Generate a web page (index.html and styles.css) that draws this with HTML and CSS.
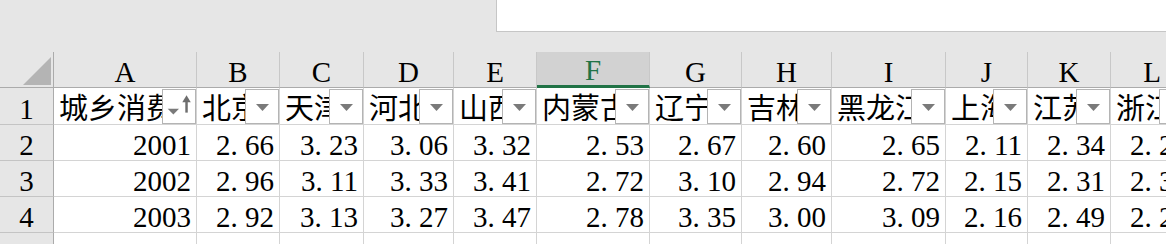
FILE: index.html
```html
<!DOCTYPE html>
<html lang="zh-CN">
<head>
<meta charset="utf-8">
<title>城乡消费</title>
<link rel="stylesheet" href="styles.css">
</head>
<body>
<div class="topbar"><div class="formula"></div></div>
<div class="sheet">
  <div class="corner"><svg width="28" height="28" viewBox="0 0 28 28"><polygon points="28,0 28,28 0,28" fill="#b4b4b4"/></svg></div>
  <div class="ch">A</div><div class="ch">B</div><div class="ch">C</div><div class="ch">D</div><div class="ch">E</div><div class="ch sel">F</div><div class="ch">G</div><div class="ch">H</div><div class="ch">I</div><div class="ch">J</div><div class="ch">K</div><div class="ch">L</div>

  <div class="rh r1">1</div>
  <div class="c">城乡消费水平<span class="fb"><svg width="34" height="35" viewBox="0 0 34 35"><polygon points="5,20 17,20 11,26" fill="#7a7a7a"/><polygon points="20.5,13 25,5.5 29.5,13" fill="#6e6e6e"/><rect x="23.7" y="12" width="2.6" height="12" fill="#6e6e6e"/></svg></span></div>
  <div class="c">北京<span class="fb"><svg class="ar" width="13" height="7" viewBox="0 0 13 7"><polygon points="0,0 13,0 6.5,7" fill="#7a7a7a"/></svg></span></div>
  <div class="c">天津<span class="fb"><svg class="ar" width="13" height="7" viewBox="0 0 13 7"><polygon points="0,0 13,0 6.5,7" fill="#7a7a7a"/></svg></span></div>
  <div class="c">河北<span class="fb"><svg class="ar" width="13" height="7" viewBox="0 0 13 7"><polygon points="0,0 13,0 6.5,7" fill="#7a7a7a"/></svg></span></div>
  <div class="c">山西<span class="fb"><svg class="ar" width="13" height="7" viewBox="0 0 13 7"><polygon points="0,0 13,0 6.5,7" fill="#7a7a7a"/></svg></span></div>
  <div class="c">内蒙古<span class="fb"><svg class="ar" width="13" height="7" viewBox="0 0 13 7"><polygon points="0,0 13,0 6.5,7" fill="#7a7a7a"/></svg></span></div>
  <div class="c">辽宁<span class="fb"><svg class="ar" width="13" height="7" viewBox="0 0 13 7"><polygon points="0,0 13,0 6.5,7" fill="#7a7a7a"/></svg></span></div>
  <div class="c">吉林<span class="fb"><svg class="ar" width="13" height="7" viewBox="0 0 13 7"><polygon points="0,0 13,0 6.5,7" fill="#7a7a7a"/></svg></span></div>
  <div class="c">黑龙江<span class="fb"><svg class="ar" width="13" height="7" viewBox="0 0 13 7"><polygon points="0,0 13,0 6.5,7" fill="#7a7a7a"/></svg></span></div>
  <div class="c">上海<span class="fb"><svg class="ar" width="13" height="7" viewBox="0 0 13 7"><polygon points="0,0 13,0 6.5,7" fill="#7a7a7a"/></svg></span></div>
  <div class="c">江苏<span class="fb"><svg class="ar" width="13" height="7" viewBox="0 0 13 7"><polygon points="0,0 13,0 6.5,7" fill="#7a7a7a"/></svg></span></div>
  <div class="c">浙江<span class="fb"><svg class="ar" width="13" height="7" viewBox="0 0 13 7"><polygon points="0,0 13,0 6.5,7" fill="#7a7a7a"/></svg></span></div>

  <div class="rh">2</div>
  <div class="c n">2001</div>
  <div class="c n">2<span class="d">.</span>66</div>
  <div class="c n">3<span class="d">.</span>23</div>
  <div class="c n">3<span class="d">.</span>06</div>
  <div class="c n">3<span class="d">.</span>32</div>
  <div class="c n">2<span class="d">.</span>53</div>
  <div class="c n">2<span class="d">.</span>67</div>
  <div class="c n">2<span class="d">.</span>60</div>
  <div class="c n">2<span class="d">.</span>65</div>
  <div class="c n">2<span class="d">.</span>11</div>
  <div class="c n">2<span class="d">.</span>34</div>
  <div class="c n">2<span class="d">.</span>25</div>

  <div class="rh">3</div>
  <div class="c n">2002</div>
  <div class="c n">2<span class="d">.</span>96</div>
  <div class="c n">3<span class="d">.</span>11</div>
  <div class="c n">3<span class="d">.</span>33</div>
  <div class="c n">3<span class="d">.</span>41</div>
  <div class="c n">2<span class="d">.</span>72</div>
  <div class="c n">3<span class="d">.</span>10</div>
  <div class="c n">2<span class="d">.</span>94</div>
  <div class="c n">2<span class="d">.</span>72</div>
  <div class="c n">2<span class="d">.</span>15</div>
  <div class="c n">2<span class="d">.</span>31</div>
  <div class="c n">2<span class="d">.</span>36</div>

  <div class="rh">4</div>
  <div class="c n">2003</div>
  <div class="c n">2<span class="d">.</span>92</div>
  <div class="c n">3<span class="d">.</span>13</div>
  <div class="c n">3<span class="d">.</span>27</div>
  <div class="c n">3<span class="d">.</span>47</div>
  <div class="c n">2<span class="d">.</span>78</div>
  <div class="c n">3<span class="d">.</span>35</div>
  <div class="c n">3<span class="d">.</span>00</div>
  <div class="c n">3<span class="d">.</span>09</div>
  <div class="c n">2<span class="d">.</span>16</div>
  <div class="c n">2<span class="d">.</span>49</div>
  <div class="c n">2<span class="d">.</span>24</div>

  <div class="rh">5</div>
  <div class="c n">2004</div>
  <div class="c n">2<span class="d">.</span>93</div>
  <div class="c n">3<span class="d">.</span>09</div>
  <div class="c n"></div>
  <div class="c n">3<span class="d">.</span>65</div>
  <div class="c n"></div>
  <div class="c n"></div>
  <div class="c n"></div>
  <div class="c n"></div>
  <div class="c n">2<span class="d">.</span>26</div>
  <div class="c n">2<span class="d">.</span>43</div>
  <div class="c n">2<span class="d">.</span>25</div>
</div>
</body>
</html>
```
FILE: styles.css
```css
html, body {
  margin: 0;
  padding: 0;
  background: #e6e6e6;
  overflow: hidden;
  width: 1166px;
  height: 244px;
}

.topbar {
  height: 32px;
  display: flex;
}

.formula {
  margin-left: 496px;
  flex: 1;
  background: #ffffff;
  border-left: 1px solid #c6c6c6;
  border-bottom: 1px solid #c6c6c6;
}

.sheet {
  margin-top: 20px;
  display: grid;
  grid-template-columns: 54px 143px 83px 84px 90px 83px 113px 92px 90px 114px 82px 83px 83px;
  grid-template-rows: 36px 37px 36px 36px 36px 36px;
  width: 1194px;
  font-family: "Liberation Serif", "Noto Sans CJK SC", serif;
  font-size: 29px;
  line-height: 29px;
  color: #000;
}

.sheet > div {
  box-sizing: border-box;
  display: flex;
  align-items: flex-end;
  white-space: nowrap;
  overflow: hidden;
  position: relative;
}

.corner {
  border-right: 1px solid #ababab;
  border-bottom: 1px solid #ababab;
  justify-content: flex-end;
  padding: 0 2px 2px 0;
}

.corner svg {
  display: block;
}

.ch {
  justify-content: center;
  border-right: 1px solid #c8c8c8;
  border-bottom: 1px solid #ababab;
}

.ch.sel {
  background: #d2d2d2;
  color: #217346;
  border-bottom: 3px solid #217346;
  padding-bottom: 0;
}

.rh {
  justify-content: center;
  border-right: 1px solid #ababab;
  border-bottom: 1px solid #c4c4c4;
}

.c {
  background: #ffffff;
  border-right: 1px solid #d4d4d4;
  border-bottom: 1px solid #d4d4d4;
  padding: 0 5px 0 5px;
}

.n {
  justify-content: flex-end;
}

.d {
  display: inline-block;
  width: 0.5em;
}

.fb {
  position: absolute;
  top: 1px;
  right: 0;
  width: 34px;
  height: 35px;
  box-sizing: border-box;
  border: 1px solid #b4b4b4;
  background: #ffffff;
  display: flex;
  align-items: center;
  justify-content: center;
}

.fb svg {
  display: block;
}

.fb .ar {
  margin-top: 2px;
}
```
